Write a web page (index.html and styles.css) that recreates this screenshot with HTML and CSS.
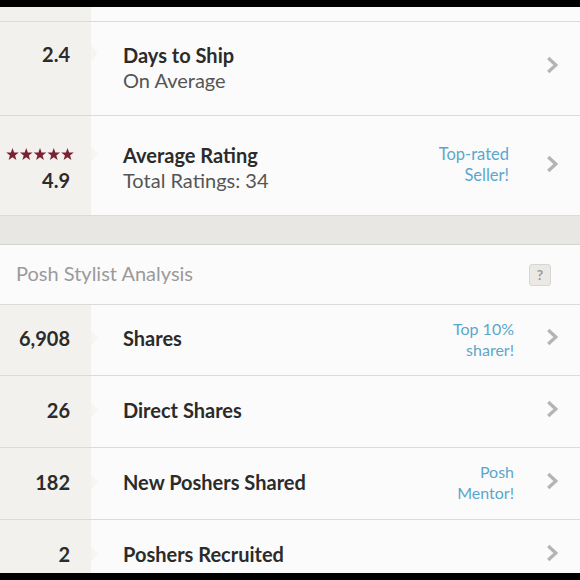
FILE: index.html
```html
<!DOCTYPE html>
<html>
<head>
<meta charset="utf-8">
<link rel="stylesheet" href="styles.css">
</head>
<body>
<div class="screen">
  <div class="row row-top">
    <div class="left"></div>
    <div class="right"></div>
  </div>
  <div class="row row-tall r1">
    <div class="left top"><span class="value">2.4</span><span class="notch"></span></div>
    <div class="right top">
      <div class="label"><div class="title">Days to Ship</div><div class="sub">On Average</div></div>
      <svg class="chev" width="12" height="18" viewBox="0 0 12 18"><path d="M2.2 2 L9.8 9 L2.2 16" fill="none" stroke="#b4b4b4" stroke-width="3.2"/></svg>
    </div>
  </div>
  <div class="row row-tall2 r2">
    <div class="left top stack">
      <div class="stars">
        <svg width="68" height="12" viewBox="0 0 68 12">
          <g fill="#7b2232">
            <path id="s" d="M6.5 0 L8.09 4.42 L12.78 4.56 L9.07 7.43 L10.38 11.94 L6.5 9.3 L2.62 11.94 L3.93 7.43 L0.22 4.56 L4.91 4.42 Z"/>
            <use href="#s" x="13.75"/>
            <use href="#s" x="27.5"/>
            <use href="#s" x="41.25"/>
            <use href="#s" x="55"/>
          </g>
        </svg>
      </div>
      <span class="value">4.9</span><span class="notch"></span>
    </div>
    <div class="right top">
      <div class="label"><div class="title">Average Rating</div><div class="sub">Total Ratings: 34</div></div>
      <div class="badge">Top-rated<br>Seller!</div>
      <svg class="chev" width="12" height="18" viewBox="0 0 12 18"><path d="M2.2 2 L9.8 9 L2.2 16" fill="none" stroke="#b4b4b4" stroke-width="3.2"/></svg>
    </div>
  </div>
  <div class="band"></div>
  <div class="section-head">
    <span>Posh Stylist Analysis</span>
    <span class="help">?</span>
  </div>
  <div class="row row-stat first">
    <div class="left"><span class="value">6,908</span><span class="notch"></span></div>
    <div class="right">
      <div class="title">Shares</div>
      <div class="badge b2">Top 10%<br>sharer!</div>
      <svg class="chev" width="12" height="18" viewBox="0 0 12 18"><path d="M2.2 2 L9.8 9 L2.2 16" fill="none" stroke="#b4b4b4" stroke-width="3.2"/></svg>
    </div>
  </div>
  <div class="row row-stat">
    <div class="left"><span class="value">26</span><span class="notch"></span></div>
    <div class="right">
      <div class="title">Direct Shares</div>
      <svg class="chev" width="12" height="18" viewBox="0 0 12 18"><path d="M2.2 2 L9.8 9 L2.2 16" fill="none" stroke="#b4b4b4" stroke-width="3.2"/></svg>
    </div>
  </div>
  <div class="row row-stat">
    <div class="left"><span class="value">182</span><span class="notch"></span></div>
    <div class="right">
      <div class="title">New Poshers Shared</div>
      <div class="badge b2">Posh<br>Mentor!</div>
      <svg class="chev" width="12" height="18" viewBox="0 0 12 18"><path d="M2.2 2 L9.8 9 L2.2 16" fill="none" stroke="#b4b4b4" stroke-width="3.2"/></svg>
    </div>
  </div>
  <div class="row row-stat last">
    <div class="left"><span class="value">2</span><span class="notch"></span></div>
    <div class="right">
      <div class="title">Poshers Recruited</div>
      <svg class="chev" width="12" height="18" viewBox="0 0 12 18"><path d="M2.2 2 L9.8 9 L2.2 16" fill="none" stroke="#b4b4b4" stroke-width="3.2"/></svg>
    </div>
  </div>
</div>
</body>
</html>
```
FILE: styles.css
```css
html, body {
  margin: 0;
  padding: 0;
  background: #000;
}
.screen {
  margin-top: 7px;
  height: 566px;
  overflow: hidden;
  background: #fcfbfb;
  font-family: Lato, "Noto Sans", sans-serif;
  color: #2e2e2e;
}
.row {
  display: grid;
  grid-template-columns: 91px 1fr;
  border-bottom: 1px solid #dcdbd9;
}
.row-top { height: 14px; }
.row-tall { height: 93px; }
.row-tall2 { height: 99px; }
.row-stat { height: 71px; }
.row-stat.first { height: 70px; }
.row-stat.last { border-bottom: none; }
.left {
  background: #f3f1ee;
  position: relative;
  display: flex;
  align-items: center;
  justify-content: flex-end;
  padding-right: 21px;
}
.row-stat .left,
.row-stat .right {
  padding-bottom: 3px;
}
.left.top {
  align-items: flex-start;
}
.r1 .left { padding-top: 20px; }
.r1 .right { padding-top: 21px; }
.r2 .right { padding-top: 27px; }
.left.stack {
  flex-direction: column;
  align-items: flex-end;
  justify-content: flex-start;
  padding-top: 32px;
  gap: 8px;
}
.stars {
  margin-right: -4px;
  line-height: 0;
}
.value {
  font-size: 20px;
  font-weight: 700;
  line-height: 25px;
  color: #2b2b2b;
}
.notch {
  position: absolute;
  right: -7px;
  top: 50%;
  margin-top: -10px;
  width: 0;
  height: 0;
  border-top: 8px solid transparent;
  border-bottom: 8px solid transparent;
  border-left: 7px solid #f6f5f3;
}
.r1 .notch { top: 23px; margin-top: 0; }
.r2 .notch { top: 30px; margin-top: 0; }
.right {
  display: flex;
  align-items: center;
  padding-left: 32px;
  padding-right: 22px;
}
.right.top { align-items: flex-start; }
.label { flex: 1; }
.right > .title { flex: 1; }
.title {
  font-size: 20px;
  font-weight: 700;
  color: #2b2b2b;
  line-height: 25px;
}
.sub {
  font-size: 20px;
  color: #555;
  line-height: 25px;
}
.badge {
  text-align: right;
  color: #5aa7cc;
  font-size: 16.5px;
  line-height: 21px;
  margin-right: 37px;
}
.r2 .badge { margin-top: 1px; }
.badge.b2 { font-size: 16px; margin-right: 32px; }
.chev { display: block; margin-bottom: 3px; }
.r1 .chev { margin-top: 13px; }
.r2 .chev { margin-top: 12px; }
.band {
  height: 28px;
  background: #e9e7e3;
  border-bottom: 1px solid #d6d4d0;
}
.section-head {
  height: 59px;
  border-bottom: 1px solid #dcdbd9;
  display: flex;
  align-items: center;
  justify-content: space-between;
  padding: 0 29px 0 16px;
  font-size: 20px;
  color: #9a9a9a;
  background: #fcfbfb;
}
.section-head > span:first-child { margin-top: -3px; }
.help {
  width: 20px;
  height: 20px;
  border: 1px solid #d8d6d2;
  background: #ebe9e6;
  border-radius: 3px;
  display: flex;
  align-items: center;
  justify-content: center;
  font-size: 14px;
  font-weight: 700;
  color: #9a9a9a;
}
```
